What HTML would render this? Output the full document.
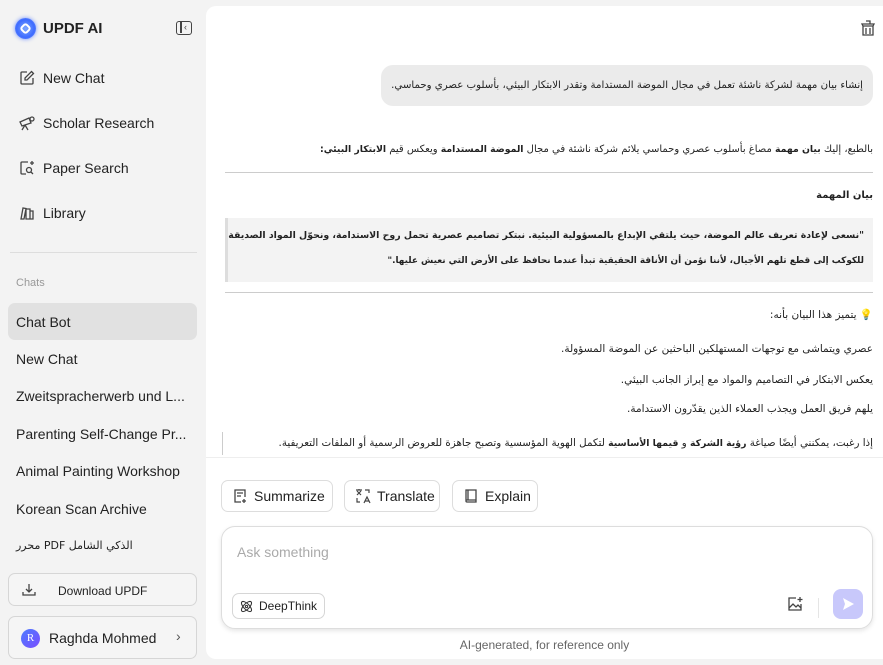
<!DOCTYPE html>
<html><head><meta charset="utf-8"><style>
*{box-sizing:border-box;margin:0;padding:0}
body{width:883px;height:665px;background:#f3f3f3;font-family:"Liberation Sans","DejaVu Sans",sans-serif;position:relative;overflow:hidden;color:#222}
.abs{position:absolute}
.nav{position:absolute;left:19px;font-size:14px;color:#222;display:flex;align-items:center;gap:8px}
.chat{position:absolute;left:16px;font-size:14px;color:#222;white-space:nowrap}
.main{position:absolute;left:206px;top:6px;width:677px;height:653px;background:#fff;border-radius:10px 0 0 10px}
.ar{position:absolute;right:10px;direction:rtl;font-family:"DejaVu Sans",sans-serif;font-size:10.5px;color:#222;white-space:nowrap}
.ar b{font-size:9.3px}
.btn{position:absolute;top:474px;height:32px;border:1px solid #ddd;border-radius:7px;display:flex;align-items:center;gap:6px;padding:0 10px;font-size:14px;color:#222;background:#fff;white-space:nowrap}
svg{display:block;flex-shrink:0}
</style></head><body>
<!-- sidebar -->
<div class="abs" style="left:15px;top:18px;width:21px;height:21px;border-radius:50%;background:radial-gradient(circle,#7fa8ff 0,#3d6bff 60%,#8aa8ff 100%);box-shadow:0 0 4px #6f8fff"><div style="position:absolute;left:6px;top:6px;width:9px;height:9px;border:2px solid #fff;border-radius:3px;transform:rotate(45deg)"></div></div>
<div class="abs" style="left:43px;top:20px;font-size:15px;font-weight:bold">UPDF AI</div>
<div class="abs" style="left:176px;top:21px;width:16px;height:14px;border:1.5px solid #444;border-radius:3px"><div style="position:absolute;left:3px;top:0;width:1.5px;height:11px;background:#444"></div><div style="position:absolute;left:7px;top:1px;font-size:9px;line-height:9px;color:#444">‹</div></div>

<div class="nav" style="top:70px"><svg width="16" height="16" viewBox="0 0 16 16" fill="none" stroke="#444" stroke-width="1.3"><path d="M8 2H3a1 1 0 0 0-1 1v10a1 1 0 0 0 1 1h10a1 1 0 0 0 1-1V8"/><path d="M12.5 1.5l2 2L8 10H6V8z"/></svg>New Chat</div>
<div class="nav" style="top:115px"><svg width="16" height="16" viewBox="0 0 16 16" fill="none" stroke="#444" stroke-width="1.3"><path d="M1 7l9-4 2 5-9 3z"/><circle cx="13" cy="4" r="2"/><path d="M6 10l-3 5M6 10l3 5"/></svg>Scholar Research</div>
<div class="nav" style="top:160px"><svg width="16" height="16" viewBox="0 0 16 16" fill="none" stroke="#444" stroke-width="1.3"><path d="M7 14H3a1 1 0 0 1-1-1V3a1 1 0 0 1 1-1h6"/><circle cx="10" cy="10" r="2.5"/><path d="M12 12l2 2M13 1v4M11 3h4"/></svg>Paper Search</div>
<div class="nav" style="top:205px"><svg width="16" height="16" viewBox="0 0 16 16" fill="none" stroke="#444" stroke-width="1.3"><path d="M2 14l2-11 3 .5-2 10.5zM7 4h4v10H7zM11 6h3v8h-3"/></svg>Library</div>
<div class="abs" style="left:10px;top:252px;width:187px;height:1px;background:#ddd"></div>
<div class="abs" style="left:16px;top:277px;font-size:11px;color:#999">Chats</div>
<div class="abs" style="left:8px;top:303px;width:189px;height:37px;background:#e1e1e1;border-radius:7px"></div>
<div class="chat" style="top:314px">Chat Bot</div>
<div class="chat" style="top:351px">New Chat</div>
<div class="chat" style="top:388px">Zweitspracherwerb und L...</div>
<div class="chat" style="top:426px">Parenting Self-Change Pr...</div>
<div class="chat" style="top:463px">Animal Painting Workshop</div>
<div class="chat" style="top:501px">Korean Scan Archive</div>
<div class="chat" style="top:539px;direction:rtl;left:16px;font-family:'DejaVu Sans',sans-serif;font-size:11px">الذكي الشامل PDF محرر</div>
<div class="abs" style="left:8px;top:573px;width:189px;height:33px;border:1px solid #d6d6d6;border-radius:7px;background:#f5f5f5;font-size:12px;color:#222"><svg class="abs" style="left:13px;top:9px" width="14" height="14" viewBox="0 0 14 14" fill="none" stroke="#444" stroke-width="1.3"><path d="M7 1v8M4 6l3 3 3-3M1 9v3h12V9"/></svg><span class="abs" style="left:49px;top:10px">Download UPDF</span></div>
<div class="abs" style="left:8px;top:616px;width:189px;height:43px;border:1px solid #d6d6d6;border-radius:7px;background:#f5f5f5"><div class="abs" style="left:12px;top:12px;width:19px;height:19px;border-radius:50%;background:linear-gradient(135deg,#4d7cff,#7a4dff);color:#fff;font-family:'Liberation Serif',serif;font-size:11px;text-align:center;line-height:19px">R</div><span class="abs" style="left:40px;top:13px;font-size:14px">Raghda Mohmed</span><span class="abs" style="left:167px;top:11px;font-size:14px;color:#555">›</span></div>

<!-- main -->
<div class="main">
<svg class="abs" style="left:654px;top:14px" width="16" height="17" viewBox="0 0 16 17" fill="none" stroke="#444" stroke-width="1.3"><path d="M6 1h4v3M2 4h12l-1 2H3zM3 6v9h10V6M6 8v6M10 8v6"/></svg>
<div class="abs" style="left:175px;top:59px;width:492px;height:41px;background:#ebebeb;border-radius:12px"></div>
<div class="ar" style="top:74px;right:20px;font-size:10.2px">إنشاء بيان مهمة لشركة ناشئة تعمل في مجال الموضة المستدامة وتقدر الابتكار البيئي، بأسلوب عصري وحماسي.</div>
<div class="ar" style="top:138px;font-size:10px">بالطبع، إليك <b>بيان مهمة</b> مصاغ بأسلوب عصري وحماسي يلائم شركة ناشئة في مجال <b>الموضة المستدامة</b> ويعكس قيم <b>الابتكار البيئي:</b></div>
<div class="abs" style="left:19px;top:166px;width:648px;height:1px;background:#ccc"></div>
<div class="ar" style="top:184px;font-weight:bold;font-size:10px">بيان المهمة</div>
<div class="abs" style="left:19px;top:212px;width:648px;height:64px;background:#f3f3f3;border-left:3px solid #ddd"></div>
<div class="ar" style="top:224px;right:19px;font-weight:bold;font-size:9.4px">"نسعى لإعادة تعريف عالم الموضة، حيث يلتقي الإبداع بالمسؤولية البيئية. نبتكر تصاميم عصرية تحمل روح الاستدامة، ونحوّل المواد الصديقة</div>
<div class="ar" style="top:250px;right:19px;font-weight:bold;font-size:8.9px">للكوكب إلى قطع تلهم الأجيال، لأننا نؤمن أن الأناقة الحقيقية تبدأ عندما نحافظ على الأرض التي نعيش عليها."</div>
<div class="abs" style="left:19px;top:286px;width:648px;height:1px;background:#ccc"></div>
<div class="ar" style="top:302px">💡 يتميز هذا البيان بأنه:</div>
<div class="ar" style="top:337px">عصري ويتماشى مع توجهات المستهلكين الباحثين عن الموضة المسؤولة.</div>
<div class="ar" style="top:368px">يعكس الابتكار في التصاميم والمواد مع إبراز الجانب البيئي.</div>
<div class="ar" style="top:397px">يلهم فريق العمل ويجذب العملاء الذين يقدّرون الاستدامة.</div>
<div class="abs" style="left:16px;top:426px;width:1px;height:23px;background:#ccc"></div>
<div class="ar" style="top:431px;font-size:10.3px">إذا رغبت، يمكنني أيضًا صياغة <b>رؤية الشركة</b> و <b>قيمها الأساسية</b> لتكمل الهوية المؤسسية وتصبح جاهزة للعروض الرسمية أو الملفات التعريفية.</div>
<div class="abs" style="left:0;top:451px;width:677px;height:1px;background:#eee"></div>

<div class="btn" style="left:15px;width:112px"><svg width="16" height="16" viewBox="0 0 16 16" fill="none" stroke="#444" stroke-width="1.3"><path d="M9 14H3V2h10v7M5 5h6M5 8h4M12 11v4M10 13h4"/></svg>Summarize</div>
<div class="btn" style="left:138px;width:96px"><svg width="16" height="16" viewBox="0 0 16 16" fill="none" stroke="#444" stroke-width="1.2"><path d="M1 2h6M4 1v1M2 3l4 4M6 3L2 7M10 2h4v3M2 10v4h3M9 15l3-6 3 6M10 13h4"/></svg>Translate</div>
<div class="btn" style="left:246px;width:86px"><svg width="16" height="16" viewBox="0 0 16 16" fill="none" stroke="#444" stroke-width="1.3"><path d="M3 2h10v12H4a1 1 0 0 1-1-1zM5 2v10M3 12h10"/></svg>Explain</div>

<div class="abs" style="left:15px;top:520px;width:652px;height:103px;border:1px solid #ddd;border-radius:14px;box-shadow:0 2px 5px rgba(0,0,0,.1)"></div>
<div class="abs" style="left:31px;top:538px;font-size:14px;color:#aaa">Ask something</div>
<div class="abs" style="left:26px;top:587px;width:93px;height:26px;border:1px solid #d6d6d6;border-radius:7px;font-size:12px;display:flex;align-items:center;gap:5px;padding-left:6px"><svg width="15" height="15" viewBox="0 0 16 16" fill="none" stroke="#333" stroke-width="1.1"><ellipse cx="8" cy="8" rx="7" ry="3" transform="rotate(45 8 8)"/><ellipse cx="8" cy="8" rx="7" ry="3" transform="rotate(-45 8 8)"/><circle cx="8" cy="8" r="1.2"/></svg>DeepThink</div>
<svg class="abs" style="left:581px;top:590px" width="17" height="16" viewBox="0 0 17 16" fill="none" stroke="#444" stroke-width="1.3"><path d="M9 2H2v12h12V8M2 12l4-4 3 3 2-2 3 3M13 1v5M10.5 3.5h5"/></svg>
<div class="abs" style="left:612px;top:592px;width:1px;height:20px;background:#e5e5e5"></div>
<div class="abs" style="left:627px;top:583px;width:30px;height:30px;background:#c8c8fb;border-radius:8px"><svg class="abs" style="left:8px;top:8px" width="14" height="14" viewBox="0 0 14 14"><path d="M2 1l11 6-11 6 2-6z" fill="#fff"/></svg></div>
<div class="abs" style="left:0;width:677px;top:632px;text-align:center;font-size:12px;color:#666">AI-generated, for reference only</div>
</div>
</body></html>
